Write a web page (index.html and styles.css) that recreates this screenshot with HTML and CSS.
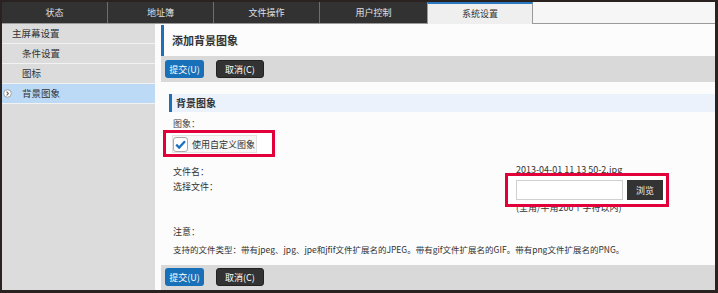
FILE: index.html
```html
<!DOCTYPE html>
<html lang="zh">
<head>
<meta charset="utf-8">
<link rel="stylesheet" href="styles.css">
</head>
<body>
<div class="app">
  <div class="tabs">
    <div class="tab">状态</div>
    <div class="tab">地址簿</div>
    <div class="tab">文件操作</div>
    <div class="tab">用户控制</div>
    <div class="tab active">系统设置</div>
    <div class="tab-rest"></div>
  </div>
  <div class="body">
    <nav class="sidebar">
      <div class="nav-item">主屏幕设置</div>
      <div class="nav-item sub">条件设置</div>
      <div class="nav-item sub">图标</div>
      <div class="nav-item sub selected">
        <svg class="nav-icon" width="9" height="9" viewBox="0 0 9 9"><circle cx="4.5" cy="4.5" r="3.8" fill="#fff" stroke="#9a9a9a" stroke-width="0.9"/><path d="M3.6 2.6 L5.4 4.5 L3.6 6.4" fill="none" stroke="#666" stroke-width="1.1"/></svg>
        背景图象
      </div>
    </nav>
    <main class="main">
      <h1 class="page-title">添加背景图象</h1>
      <div class="btnbar">
        <button class="btn btn-primary">提交(U)</button>
        <button class="btn btn-dark">取消(C)</button>
      </div>
      <div class="content">
        <h2 class="section-title">背景图象</h2>
        <div class="section">
          <div class="field-label">图象：</div>
          <div class="callout callout-check">
            <label class="check-label">
              <span class="checkbox"><svg width="13" height="13" viewBox="0 0 13 13"><path d="M2.2 6.6 L5.2 9.6 L11 3.2" fill="none" stroke="#1b6fc2" stroke-width="2.2"/></svg></span>
              使用自定义图象
            </label>
          </div>
          <div class="form">
            <div class="form-label lbl-name">文件名：</div>
            <div class="form-value filename">2013-04-01 11 13 50-2.jpg</div>
            <div class="form-label lbl-file">选择文件：</div>
            <div class="form-value file-cell">
              <div class="callout callout-file">
                <span class="file-input"></span>
                <button class="btn-browse">浏览</button>
              </div>
            </div>
            <div class="form-label"></div>
            <div class="form-value hint">(全角/半角200个字符以内)</div>
          </div>
          <div class="note-title">注意：</div>
          <div class="note">支持的文件类型：带有jpeg、jpg、jpe和jfif文件扩展名的JPEG。带有gif文件扩展名的GIF。带有png文件扩展名的PNG。</div>
        </div>
      </div>
      <div class="btnbar btnbar-bottom">
        <button class="btn btn-primary">提交(U)</button>
        <button class="btn btn-dark">取消(C)</button>
      </div>
    </main>
  </div>
</div>
</body>
</html>
```
FILE: styles.css
```css
* { box-sizing: border-box; }
html, body { margin: 0; padding: 0; }
body {
  font-family: "Noto Sans CJK SC", "Noto Sans", sans-serif;
  font-size: 9px;
  color: #333;
  background: #2a2220;
}
.app {
  width: 718px;
  height: 293px;
  border: 2px solid #2a2220;
  border-right-width: 3px;
  border-bottom-width: 3px;
  display: flex;
  flex-direction: column;
  background: #fcfcfc;
  overflow: hidden;
}
.tabs {
  display: flex;
  height: 22px;
  background: #f6f6f6;
  border-bottom: 1px solid #9a9a9a;
  flex: none;
}
.tab {
  width: 106px;
  background: #323232;
  color: #e0e0e0;
  text-align: center;
  line-height: 21px;
  border-right: 1px solid #6e6e6e;
}
.tab:nth-child(4) { width: 107px; border-right: none; }
.tab.active {
  background: #efefef;
  color: #333;
  border-top: 2px solid #2a78c2;
  border-left: 1px solid #9a9a9a;
  border-right: 1px solid #9a9a9a;
  line-height: 19px;
  height: 22px;
  margin-bottom: -1px;
}
.tab-rest { flex: 1; }
.body {
  flex: 1;
  display: flex;
  gap: 6px;
  min-height: 0;
}
.sidebar {
  width: 153px;
  background: #dcdcdc;
  flex: none;
}
.nav-item {
  height: 20px;
  line-height: 19px;
  padding-left: 10px;
  border-bottom: 1px solid #f2f2f2;
  font-size: 9.5px;
  position: relative;
}
.nav-item.sub { padding-left: 20px; }
.nav-item.selected { background: #bcdaf6; }
.nav-icon { position: absolute; left: 1px; top: 5px; }
.main {
  flex: 1;
  display: flex;
  flex-direction: column;
  background: #fcfcfc;
}
.page-title {
  margin: 1px 0 0;
  height: 31px;
  line-height: 31px;
  border-left: 3px solid #1f6fb6;
  padding-left: 8px;
  font-size: 11px;
  font-weight: bold;
  color: #333;
}
.btnbar {
  height: 26px;
  background: #d9d9d9;
  display: flex;
  align-items: flex-start;
  gap: 12px;
  padding: 4px 4px;
  flex: none;
}
.btnbar-bottom { height: 25px; padding-top: 3px; }
.btn {
  height: 18px;
  border: none;
  border-radius: 3px;
  font-family: inherit;
  font-size: 9px;
  color: #fff;
  padding: 0;
}
.btn-primary { width: 39px; background: #1870b9; }
.btn-dark { width: 48px; background: #333; border: 1px solid #222; }
.content {
  flex: 1;
  padding-top: 12px;
}
.section-title {
  margin: 0 0 0 8px;
  height: 18px;
  line-height: 18px;
  background: #ebf2fc;
  border-left: 3px solid #1f6fb6;
  padding-left: 4px;
  font-size: 10px;
  font-weight: bold;
}
.section { padding-left: 12px; padding-top: 6px; }
.field-label { line-height: 12px; color: #444; }
.callout {
  border: 3px solid #e2003a;
  background: #fff;
  position: relative;
  z-index: 1;
}
.callout-check {
  width: 112px;
  height: 27px;
  margin: 0 0 0 -10px;
  padding: 2px 0 0 6px;
}
.check-label {
  display: inline-flex;
  align-items: center;
  gap: 4px;
  height: 18px;
  padding-right: 1px;
  border: 1px solid #e2e2e2;
  background: #f7f7f7;
  font-size: 9px;
}
.checkbox {
  width: 15px;
  height: 15px;
  border: 1px solid #a9a9a9;
  border-radius: 3px;
  background: #fff;
  display: flex;
  align-items: center;
  justify-content: center;
}
.form {
  display: grid;
  grid-template-columns: 343px auto;
  margin-top: 4px;
}
.form-label, .form-value { line-height: 14px; }
.lbl-name { padding-top: 4px; }
.filename { line-height: 12px; padding-top: 3px; }
.lbl-file { margin-top: 1px; }
.file-cell { height: 22px; margin-top: 1px; }
.callout-file {
  display: inline-flex;
  gap: 4px;
  margin: -7px 0 -7px -11px;
  padding: 4px 3px 4px 8px;
}
.file-input {
  width: 107px;
  height: 20px;
  border: 1px solid #d0d0d0;
  background: #fff;
}
.btn-browse {
  width: 36px;
  height: 20px;
  border: none;
  background: #333;
  color: #eee;
  font-family: inherit;
  font-size: 9px;
  padding: 0;
}
.hint { line-height: 14px; margin-top: -1px; }
.note-title { margin-top: 10px; line-height: 14px; }
.note { margin-top: 3px; line-height: 14px; font-size: 8.5px; }
```
